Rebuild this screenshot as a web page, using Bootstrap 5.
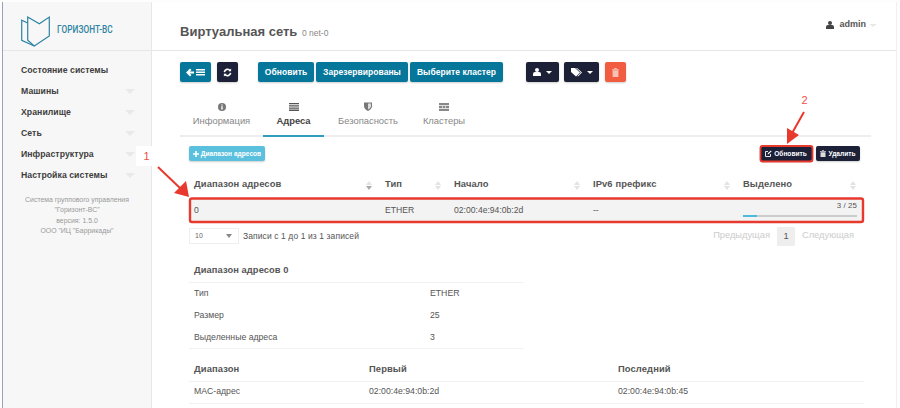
<!DOCTYPE html>
<html lang="ru">
<head>
<meta charset="utf-8">
<title>Виртуальная сеть</title>
<link rel="stylesheet" href="https://cdn.jsdelivr.net/npm/bootstrap@5.3.0/dist/css/bootstrap.min.css">
<style>
html,body{height:408px;overflow:hidden;background:#fff}
body{font-family:"Liberation Sans",Arial,sans-serif;font-size:9px;color:#555;position:relative}
.shell{height:408px;padding:2px 3px 0 2px;background:#fdfdfd}
.frame{height:406px;border-left:1px solid #8fa6bd;border-right:1px solid #f0f0f0;background:#fff;overflow:hidden}
.side{width:149px;background:#f7f7f7;border-right:1px solid #e8e8e8;flex:none}
.brand{height:49px;border-bottom:1px solid #e6e6e6;padding:9px 0 0 17px;gap:4px}
.brand-name{color:#2d83a2;font-family:Roboto,"Liberation Sans",sans-serif;font-size:11px;font-weight:500;letter-spacing:.1px;transform:scaleX(.75);transform-origin:left center;white-space:nowrap}
.menu{margin:9px 0 0;padding:0;list-style:none}
.menu li{height:21px;padding:0 16px 0 18px;font-size:8.7px;font-weight:700;color:#3d3d3d;letter-spacing:.05px}
.tri{width:0;height:0;border-left:5px solid transparent;border-right:5px solid transparent;border-top:5px solid #e9e9e9}
.about{margin-top:9px;text-align:center;font-size:6.9px;line-height:10.3px;color:#999}
.about div{white-space:nowrap}
.main{min-width:0}
.topbar{height:49px;border-bottom:1px solid #e6e6e6;padding:0 19px 0 28px}
.ttl{font-size:13px;font-weight:700;color:#555;margin-top:11px}
.ttl small{font-size:8.5px;font-weight:400;color:#888;margin-left:1px}
.acct{font-size:9px;font-weight:700;color:#555;gap:1px;margin-top:-2px}
.acct .tri{border-left-width:4px;border-right-width:4px;border-top-width:3px;margin-left:2px}
.body-pad{padding:11px 24px 0 28px}
.tb{gap:2px;height:21px}
.bt{--bs-btn-padding-y:0;--bs-btn-padding-x:0;--bs-btn-font-size:8.5px;--bs-btn-font-weight:700;--bs-btn-border-radius:2px;--bs-btn-border-width:0;height:20px;color:#fff;display:inline-flex;align-items:center;justify-content:center;gap:3px;letter-spacing:.05px;box-shadow:0 1px 2px rgba(0,0,0,.2)}
.bt:hover{color:#fff}
.teal{background:#06769a}
.navy{background:#1c2138}
.tomato{background:#f25c41}
.sky{background:#5bc0de}
.w31{width:31px}.w21{width:21px}.w56{width:56px}.w92{width:92px}.w93{width:93px}.w33{width:33px}.w35{width:35px}
.ms-b{margin-left:18px}
.ms-c{margin-left:21px}
.ms-d{margin-left:3px}
.fold{border-bottom:2px solid #eee;height:47px;margin-top:7px;width:691px}
.fold a{display:flex;flex-direction:column;align-items:center;justify-content:flex-end;height:47px;padding:0 0 7px;margin-bottom:-2px;color:#888;font-size:9.4px;text-decoration:none;gap:3px;border-bottom:2px solid transparent}
.fold a.on{color:#444;font-weight:700;border-bottom-color:#2f9dbb}
.t1{width:83px}.t2{width:61px}.t3{width:88px}.t4{width:64px}
.pane{padding:0 0 0 9px;width:684px}
.mini{height:15px;margin-top:9px}
.mini .bt{height:15px;--bs-btn-font-size:6.6px;gap:2px;letter-spacing:0}
.w76{width:76px}.w52{width:52px}.w44{width:44px}
.grid-a{table-layout:fixed;width:675px;margin:15px 0 0;--bs-table-bg:transparent;font-size:8.6px;color:#555}
.grid-a th{height:22px;padding:0 5px 6px;font-size:9.4px;font-weight:700;color:#555;border-bottom:0;letter-spacing:.1px;vertical-align:middle;position:relative}
.grid-a td{height:25px;padding:0 5px;background:#f3f3f3;border-bottom:0;vertical-align:middle;color:#555}
.grid-a td:last-child{padding:0 7px 4px 5px}
.sort{position:absolute;right:8px;top:5px;display:flex;flex-direction:column;gap:1px}
.sort i{display:block;width:0;height:0;border-left:3px solid transparent;border-right:3px solid transparent;border-bottom:4px solid #e3e3e3}
.sort i+i{border-bottom:0;border-top:4px solid #e3e3e3}
.sort.cur i+i{border-top-color:#aaa}
.bar{height:2px;background:#ccc;margin-top:3px;overflow:hidden}
.bar span{display:block;height:2px;background:#4dbbdb}
.ratio{text-align:right;font-size:7.9px;letter-spacing:.1px}
.lower{height:24px;margin-top:1px;width:665px}
.fake-sel{width:50px;height:16px;border:1px solid #eee;font-size:7px;padding:0 6px 0 5px;background:#fff;color:#666}
.fake-sel .tri{border-left-width:3px;border-right-width:3px;border-top:4px solid #888}
.count{margin-left:4px;font-size:8.5px;color:#555;letter-spacing:.1px}
.pg{font-size:9.3px;color:#ccc;gap:7px}
.pg b{font-weight:400;display:block;width:18px;height:19px;line-height:19px;text-align:center;background:#eee;color:#555;font-size:9.3px;border-radius:1px}
.sec-title{font-size:9.3px;font-weight:700;letter-spacing:.1px;margin:15px 0 0 5px;height:19px;line-height:15px;color:#555}
.grid-b{width:335px;table-layout:fixed;margin:0;font-size:8.7px;--bs-table-bg:transparent;border-top:1px solid #f2f2f2;border-bottom:1px solid #f2f2f2}
.grid-b td{height:22px;padding:0 5px;border:0;color:#555;vertical-align:middle}
.grid-c{width:675px;table-layout:fixed;margin:8px 0 0;font-size:8.7px;--bs-table-bg:transparent}
.grid-c th{height:24px;padding:0 5px;font-size:9.4px;letter-spacing:.1px;color:#555;font-weight:700;border-bottom:1px solid #f2f2f2;vertical-align:middle}
.grid-c td{height:22px;padding:0 5px;color:#555;border-bottom:1px solid #f2f2f2;vertical-align:middle}
.marks{position:absolute;left:0;top:0;pointer-events:none}
.tag{position:absolute;background:#fff;color:#ee4f45;font-size:11px;display:flex;align-items:center;justify-content:center}
.tag1{left:136px;top:146px;width:21px;height:20px}
.tag2{left:797px;top:93px;width:15px;height:15px}
.caret-w{border-top-color:#fff;border-left-width:3px;border-right-width:3px;border-top-width:3px;margin-left:2px}
</style>
</head>
<body>
<div class="shell">
<div class="frame d-flex">
  <aside class="side">
    <div class="brand d-flex align-items-center">
      <svg width="33" height="32" viewBox="0 0 33 32" fill="none" stroke="#2d83a2" stroke-width="1.2"><path d="M7.7 2 L19.3 8.7 L29.3 2 V21 L14.3 31 L7.7 25.3 Z"/><path d="M7.7 8 L1.7 5.3 V25.3 L14.3 31"/></svg>
      <span class="brand-name">ГОРИЗОНТ-ВС</span>
    </div>
    <ul class="menu">
      <li class="d-flex align-items-center">Состояние системы</li>
      <li class="d-flex align-items-center justify-content-between">Машины<span class="tri"></span></li>
      <li class="d-flex align-items-center justify-content-between">Хранилище<span class="tri"></span></li>
      <li class="d-flex align-items-center justify-content-between">Сеть<span class="tri"></span></li>
      <li class="d-flex align-items-center justify-content-between">Инфраструктура<span class="tri"></span></li>
      <li class="d-flex align-items-center justify-content-between">Настройка системы<span class="tri"></span></li>
    </ul>
    <div class="about">
      <div>Система группового управления</div>
      <div>"Горизонт-ВС"</div>
      <div>версия: 1.5.0</div>
      <div>ООО "ИЦ "Баррикады"</div>
    </div>
  </aside>
  <main class="main flex-grow-1">
    <div class="topbar d-flex align-items-center justify-content-between">
      <div class="ttl">Виртуальная сеть <small>0 net-0</small></div>
      <div class="acct d-flex align-items-center">
        <svg width="8" height="8" viewBox="0 0 8 8" fill="#444"><circle cx="4" cy="2" r="2"/><path d="M0 8 V6 Q0 4 2 4 H6 Q8 4 8 6 V8 Z"/></svg>
        <span class="ms-1">admin</span><span class="tri"></span>
      </div>
    </div>
    <div class="body-pad">
      <div class="tb d-flex align-items-start">
        <button class="btn bt teal w31"><svg width="20" height="9" viewBox="0 0 20 9" fill="#fff"><path d="M0 4.5 L4 .5 L5.5 2 L3.8 3.5 H8 V5.5 H3.8 L5.5 7 L4 8.5 Z"/><path d="M10 1h9v1.5h-9zM10 3.5h9V5h-9zM10 6h9v1.5h-9z"/></svg></button>
        <button class="btn bt navy w21 ms-1"><svg width="9" height="9" viewBox="0 0 10 10" fill="none" stroke="#fff" stroke-width="1.8"><path d="M1.5 4.5 A3.6 3.6 0 0 1 8 3"/><path d="M8.5 5.5 A3.6 3.6 0 0 1 2 7"/><path d="M9 .6 V3.6 H6 Z" fill="#fff" stroke="none"/><path d="M1 9.4 V6.4 H4 Z" fill="#fff" stroke="none"/></svg></button>
        <button class="btn bt teal w56 ms-b">Обновить</button>
        <button class="btn bt teal w92">Зарезервированы</button>
        <button class="btn bt teal w93">Выберите кластер</button>
        <button class="btn bt navy w33 ms-c"><svg width="8" height="8" viewBox="0 0 8 8" fill="#fff"><circle cx="4" cy="2" r="2"/><path d="M0 8 V6 Q0 4 2 4 H6 Q8 4 8 6 V8 Z"/></svg><span class="tri caret-w"></span></button>
        <button class="btn bt navy w35 ms-d"><svg width="11" height="9" viewBox="0 0 11 9" fill="#fff"><path d="M0 0 H4 L9 4.5 L5 8.5 L0 4 Z"/><path d="M6 0 L11 4.5 L7 8.5 L6.4 8 L9.8 4.5 L5 0 Z"/></svg><span class="tri caret-w"></span></button>
        <button class="btn bt tomato w21 ms-1"><svg width="7" height="9" viewBox="0 0 7 9" fill="#f9c0b4"><path d="M0 1.2h7v1H0zM2.2 0h2.6v1H2.2zM.6 2.6h5.8V9H.6z"/></svg></button>
      </div>
      <nav class="fold d-flex">
        <a class="t1" href="#"><svg width="8" height="8" viewBox="0 0 8 8"><circle cx="4" cy="4" r="4" fill="#777"/><path d="M3.3 1.4h1.4v1.2H3.3zM3.3 3.3h1.4v3.2H3.3z" fill="#fff"/></svg>Информация</a>
        <a class="t2 on" href="#"><svg width="10" height="8" viewBox="0 0 10 8" fill="#555"><path d="M0 0h10v1.3H0zM0 2.2h10v1.3H0zM0 4.4h10v1.3H0zM0 6.6h10v1.3H0z"/></svg>Адреса</a>
        <a class="t3" href="#"><svg width="8" height="9" viewBox="0 0 8 9"><path d="M0 .5 H8 V4 Q8 7 4 9 Q0 7 0 4 Z" fill="#777"/><path d="M4 1.5 H7 V4 Q7 6 4 7.6 Z" fill="#ddd"/></svg>Безопасность</a>
        <a class="t4" href="#"><svg width="10" height="8" viewBox="0 0 10 8" fill="#888"><path d="M0 0h10v2.3H0zM0 2.9h3v2.2H0zM7 2.9h3v2.2H7zM3.6 2.9h2.8v2.2H3.6zM0 5.7h10V8H0z"/></svg>Кластеры</a>
      </nav>
      <div class="pane">
        <div class="mini d-flex justify-content-between" style="width:671px">
          <button class="btn bt sky w76"><svg width="6" height="6" viewBox="0 0 6 6" fill="#fff"><path d="M2.2 0h1.6v2.2H6v1.6H3.8V6H2.2V3.8H0V2.2h2.2z"/></svg>Диапазон адресов</button>
          <div class="d-flex gap-1">
            <button class="btn bt navy w52"><svg width="7" height="7" viewBox="0 0 7 7" fill="none" stroke="#fff" stroke-width=".9"><path d="M5.5 4v2.5h-5v-5H3"/><path d="M2.5 4.5 L3 3 L6 .5 L6.6 1.2 L3.8 4 Z" fill="#fff" stroke="none"/></svg>Обновить</button>
            <button class="btn bt navy w44"><svg width="6" height="7" viewBox="0 0 6 7" fill="#ddd"><path d="M0 1h6v.8H0zM2 0h2v.8H2zM.5 2.2h5V7h-5z"/></svg>Удалить</button>
          </div>
        </div>
        <table class="table grid-a">
          <colgroup><col style="width:191px"><col style="width:69px"><col style="width:139px"><col style="width:150px"><col style="width:126px"></colgroup>
          <thead><tr>
            <th>Диапазон адресов<span class="sort cur"><i></i><i></i></span></th>
            <th>Тип<span class="sort"><i></i><i></i></span></th>
            <th>Начало<span class="sort"><i></i><i></i></span></th>
            <th>IPv6 префикс<span class="sort"><i></i><i></i></span></th>
            <th>Выделено<span class="sort"><i></i><i></i></span></th>
          </tr></thead>
          <tbody><tr>
            <td>0</td><td>ETHER</td><td>02:00:4e:94:0b:2d</td><td>--</td>
            <td><div class="ratio">3 / 25</div><div class="bar"><span style="width:12%"></span></div></td>
          </tr></tbody>
        </table>
        <div class="lower d-flex align-items-center justify-content-between">
          <div class="d-flex align-items-center">
            <div class="fake-sel d-flex align-items-center justify-content-between">10<span class="tri"></span></div>
            <span class="count">Записи с 1 до 1 из 1 записей</span>
          </div>
          <div class="pg d-flex align-items-center"><span>Предыдущая</span><b>1</b><span>Следующая</span></div>
        </div>
        <div class="sec-title">Диапазон адресов 0</div>
        <table class="table grid-b">
          <colgroup><col style="width:236px"><col></colgroup>
          <tbody>
            <tr><td>Тип</td><td>ETHER</td></tr>
            <tr><td>Размер</td><td>25</td></tr>
            <tr><td>Выделенные адреса</td><td>3</td></tr>
          </tbody>
        </table>
        <table class="table grid-c">
          <colgroup><col style="width:175px"><col style="width:249px"><col></colgroup>
          <thead><tr><th>Диапазон</th><th>Первый</th><th>Последний</th></tr></thead>
          <tbody><tr><td>MAC-адрес</td><td>02:00:4e:94:0b:2d</td><td>02:00:4e:94:0b:45</td></tr></tbody>
        </table>
      </div>
    </div>
  </main>
</div>
</div>
<span class="tag tag1">1</span>
<span class="tag tag2">2</span>
<svg class="marks" width="900" height="408" viewBox="0 0 900 408" fill="none">
  <rect x="190" y="198.5" width="673" height="23.5" rx="2" stroke="#e8392f" stroke-width="2.4"/>
  <rect x="760.5" y="146" width="52" height="15.5" rx="2" stroke="#e8392f" stroke-width="1.8"/>
  <path d="M158 167 L181 189" stroke="#e8392f" stroke-width="2"/>
  <path d="M189 197 L174 193 L186 181 Z" fill="#e8392f"/>
  <path d="M804 112 L791 135" stroke="#e8392f" stroke-width="2"/>
  <path d="M787 144 L787 128 L799 135 Z" fill="#e8392f"/>
</svg>
<script src="https://cdn.jsdelivr.net/npm/bootstrap@5.3.0/dist/js/bootstrap.bundle.min.js"></script>
</body>
</html>
